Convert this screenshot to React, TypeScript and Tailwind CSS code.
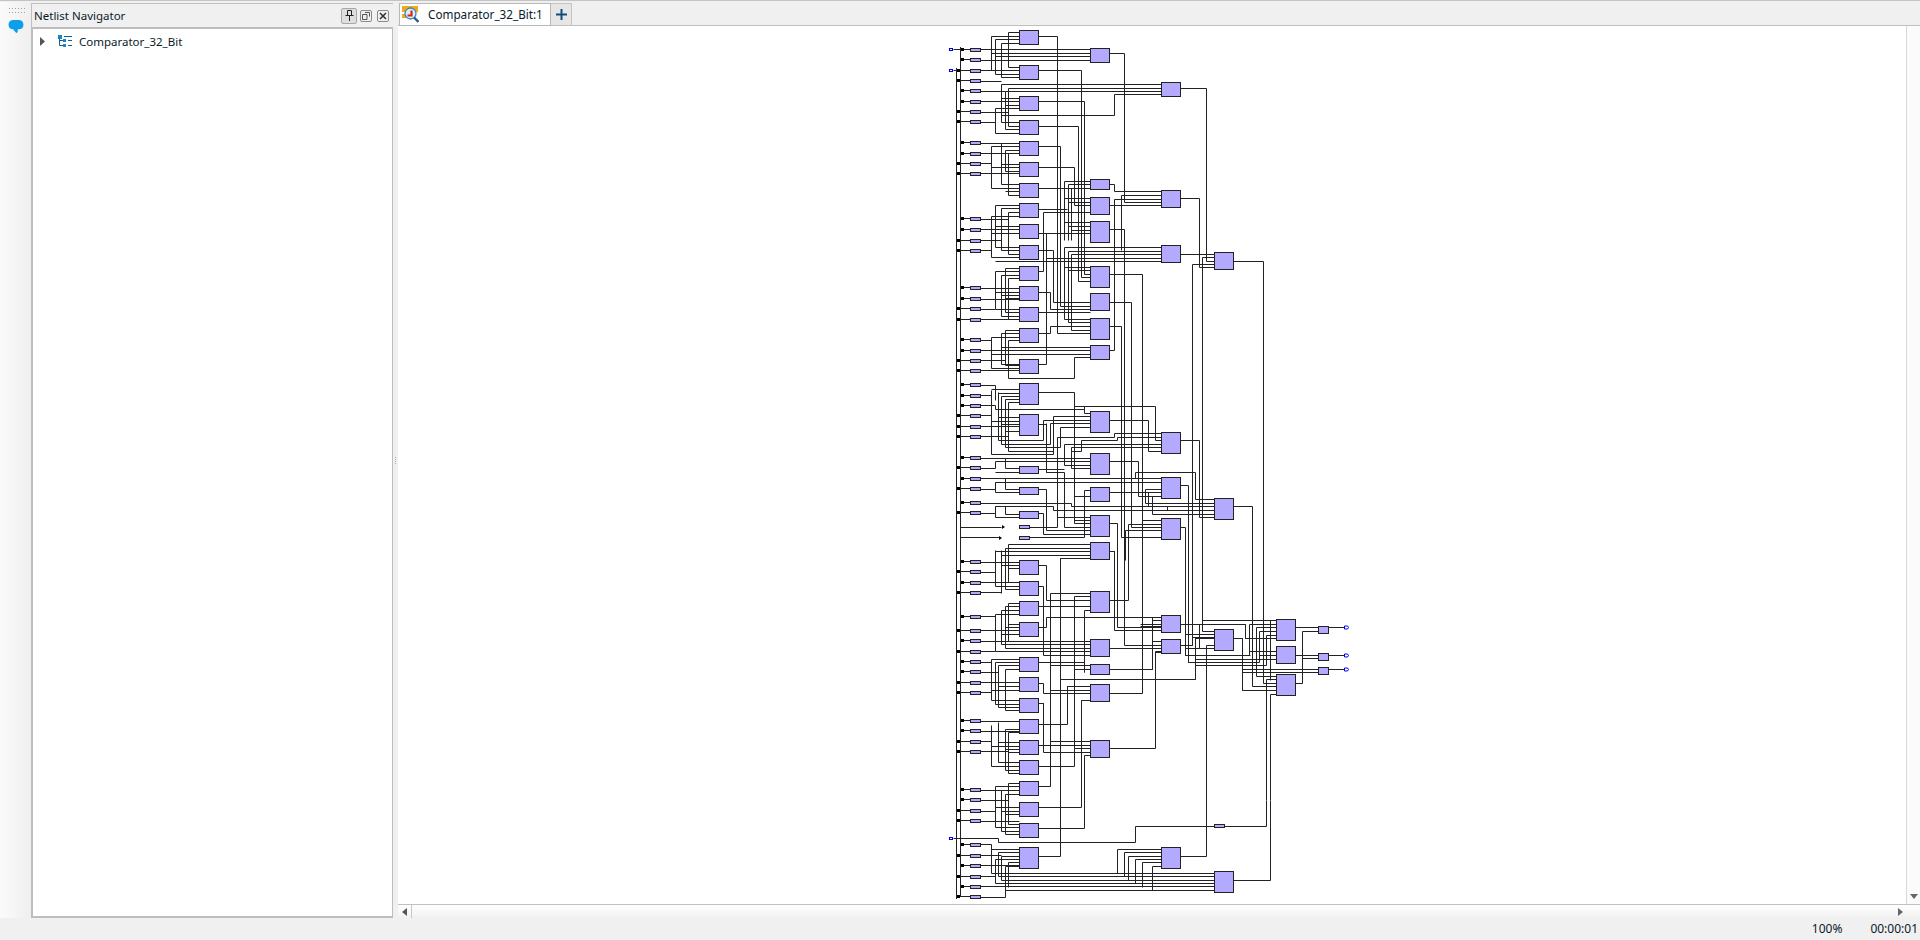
import React from "react";

type WireGroup = { ox: number; oy: number; wires: string[] };

// wires are written in crop coordinates (3x), alternating H then V from the first point
const wireGroups: WireGroup[] = [
  {
    ox: 940,
    oy: 20,
    wires: [
      "39 89 62", "39 152 49",
      "122 89 451", "122 120 451",
      "238 49 154 152 122", "122 152 238", "154 100 451",
      "238 58 166 163 238", "166 110 451",
      "238 70 184 173 238", "122 184 184",
      "238 37 205 143 238",
      "296 49 352 660", "296 152 424 660", "508 100 553 548 664", "721 205 799 660",
      "664 193 184 307 238", "664 205 205 320 238", "664 213 197 328 238", "122 213 197",
      "664 223 523 287 184", "122 245 238", "238 234 184", "238 256 197", "238 266 166 340 238",
      "122 276 205", "122 307 166",
      "296 244 433 660", "296 319 415 660", "296 379 361 660", "296 442 403 556 451",
      "122 369 238", "238 379 154 505 238", "122 401 238", "238 391 197 455 238", "238 400 205 526 238",
      "122 431 154", "122 461 238", "184 370 184 493 238", "238 433 184", "154 443 238", "197 515 238",
      "238 556 166 660", "238 566 184 660", "238 576 205 660", "238 590 154 660", "122 598 205", "122 629 238",
      "166 619 238", "154 641 238",
      "451 484 373 660", "451 494 384 660", "451 505 296", "373 535 451", "384 547 451",
      "296 568 382", "310 660 310 577 451", "395 505 395 660", "296 640 318 660",
      "373 607 451", "384 618 451", "395 630 451", "318 640 451",
      "508 493 523 514 664", "508 556 664", "664 526 544 660", "664 537 523 660",
      "721 535 778 660", "508 628 553 660",
    ],
  },
  {
    ox: 950,
    oy: 230,
    wires: [
      "322 0 322 310 420", "265 61 310 217 420", "265 124 280 0", "265 403 289 10 420",
      "265 187 301 238 420", "265 247 420", "265 310 301 290 420",
      "634 52 343 268 420", "634 63 354 278 420", "634 74 365 300 420", "290 84 634", "634 95 136",
      "420 112 343", "420 122 354", "403 0 403 133 420", "385 0 385 153 420", "394 0 394 143 420",
      "331 0 331 228 420", "478 133 577 510", "478 217 544 510", "478 290 514 510", "478 361 493 0",
      "691 73 793", "793 83 757 510", "793 103 727 510", "748 0 748 112 793", "769 0 769 93 793",
      "850 94 900", "514 0 514 60", "523 0 523 510", "373 382 420", "208 330 175 445 373 382",
      "154 352 420", "124 362 420", "124 374 420",
      "208 114 166 248 208", "208 124 136 238 208", "208 135 154 258 208", "208 146 175 268 208",
      "92 30 154", "92 60 124", "92 175 208", "92 208 208", "92 238 136", "92 269 208",
      "136 186 208", "154 196 208", "166 206 208",
      "208 301 166 405 208", "208 311 154 403 208", "208 322 124 415 208", "92 330 124", "92 362 154",
      "92 392 166", "92 422 208",
      "124 0 124 82 208", "136 0 136 52 208", "154 0 154 62 208", "175 0 175 72 208",
      "92 465 136 510", "92 497 124 510", "124 478 208", "145 490 208", "145 490 145 510",
    ],
  },
  {
    ox: 950,
    oy: 390,
    wires: [
      "265 7 373 400 420", "373 49 403 70 420", "373 49 616 150 634",
      "124 0 124 193 310 80 420", "145 8 145 152 280 92 420", "208 18 154 162 301 101 420",
      "208 27 166 173 331 112 420", "208 37 175 184 310",
      "265 104 289 246 343 411 420", "92 17 124", "92 47 136 58 403",
      "92 77 124", "124 93 208", "92 110 208", "92 140 175", "145 83 208", "154 104 208", "166 125 208",
      "478 92 595 183 634",
      "239 411 322 142 493 130 634", "634 141 503 152 394 184 365 234 420", "634 162 343 225 420", "634 172 365 184",
      "92 204 420", "92 234 136 215 420", "136 247 208", "166 205 166 235 208", "265 237 343",
      "92 266 634", "92 297 136 278 634", "136 307 208", "136 278 136 307", "166 266 166 298 208",
      "265 297 289 421 420", "265 370 280 432 420", "239 443 403 300 420", "373 320 420", "323 381 420", "373 391 420",
      "32 411 155", "32 443 148",
      "92 339 364 348 653 360 793", "92 369 136 350 310 361 793", "136 350 136 381 208", "166 350 166 373 208",
      "478 214 565 319 634", "478 308 634", "478 400 503 510", "478 484 493 510",
      "691 151 748 382 793", "691 287 715 510", "691 412 706 510",
      "556 265 556 247 736 328 793", "757 0 757 510", "727 0 727 510",
      "634 297 586 340 793", "634 308 596 350 793", "634 320 606 372 793",
      "577 0 577 510", "577 392 634", "634 402 535 510", "634 420 525 510", "514 0 514 442 634",
      "544 0 544 412 634", "523 0 523 510",
      "420 464 175 510", "420 474 166 510", "420 484 136 510", "420 495 154 510", "420 506 331 510",
      "289 100 289 246",
    ],
  },
  {
    ox: 950,
    oy: 550,
    wires: [
      "92 36 208", "92 66 136", "92 98 208", "92 128 154", "136 0 136 109 208", "154 0 154 129", "154 46 208",
      "166 0 166 118 208", "175 0 175 98", "175 56 208",
      "265 46 289 152 420", "265 109 280 315 420", "265 170 420", "265 232 289 203 607 232 634",
      "420 130 301 510", "420 140 373 510", "403 366 403 182 420",
      "478 358 607 274 634", "634 306 616 510", "478 151 535 0", "478 295 634",
      "478 3 493 242 634", "503 0 503 232 634", "634 287 523 0", "634 212 607",
      "691 224 886 265 895", "691 287 727 0", "706 0 706 317 900", "715 0 715 337 900",
      "757 0 757 243 793", "420 25 331 510", "331 388 736 266 793", "691 224 748 296 793", "793 287 770 510",
      "850 266 877 421 900", "757 212 900", "737 347 900", "877 357 900", "706 254 793",
      "92 273 420", "92 305 136 192 208", "136 305 420", "166 170 166 295 420", "154 182 154 284 420",
      "175 160 175 274 420", "208 160 175", "208 170 166", "208 182 154", "92 200 136",
      "92 242 208", "175 222 208", "166 233 208", "154 254 208",
      "208 327 124 451 208", "92 336 124", "208 337 135 462 208", "208 347 145 472 208", "92 366 145",
      "208 358 166 482 208", "92 398 208", "92 428 124", "124 420 208", "145 410 208",
      "265 338 403 366", "373 358 420", "301 347 420",
      "420 410 352 510", "420 420 301", "265 400 280 430 420", "420 451 394 510", "265 460 280 510",
      "478 430 577 0",
    ],
  },
  {
    ox: 950,
    oy: 670,
    wires: [
      "280 100 280 247 420", "265 100 280", "265 163 352 50 420", "265 226 420", "265 289 373 235 420",
      "265 349 301 214 420", "301 0 301 349", "373 0 373 235", "331 28 331 510", "770 0 770 510",
      "265 412 394 91 420", "265 475 403 256 420", "478 235 616 0",
      "92 153 208", "145 157 145 278 208", "124 167 124 290 208", "92 183 208", "208 177 166 300 208",
      "208 187 175 310 208", "92 215 124", "145 217 208", "124 228 208", "166 238 208", "92 245 175",
      "175 248 208",
      "208 340 175 463 208", "208 350 136 473 208", "208 360 154 484 208", "208 372 166 494 208",
      "92 360 208", "92 390 175", "92 423 136", "136 412 208", "154 423 208", "92 453 208", "166 433 208",
    ],
  },
  {
    ox: 940,
    oy: 800,
    wires: [
      "39 115 175 127 586 79 823", "854 79 979 0", "296 169 361 0", "721 169 799 0", "880 241 991 0",
      "122 134 154 220 823", "238 148 154", "238 158 175 230 823", "238 169 184 240 823", "122 167 184",
      "238 179 166 250 823", "122 197 238", "238 188 205 262", "122 230 166", "122 260 823",
      "238 198 197 292 122", "197 271 823",
      "664 148 532 220", "664 158 553 230", "664 169 565 240", "664 179 586 250", "664 188 607 262", "664 198 637 272",
    ],
  },
  {
    ox: 1100,
    oy: 230,
    wires: ["400 94 490 1170", "400 829 457 1170"],
  },
  {
    ox: 1140,
    oy: 600,
    wires: [
      "466 82 535", "565 82 615", "466 250 487 95 535", "466 165 535", "487 176 535", "308 208 535", "308 218 535",
      "565 166 615", "565 208 615",
      "280 115 308 270 409", "121 73 316 115 409", "188 0 188 61 409", "337 0 337 258 409", "370 0 370 250 409",
      "349 82 409", "349 82 349 228 409", "390 62 390 240",
      "137 103 223", "157 112 223", "179 145 223",
      "136 0 136 165 328 73 409", "145 0 145 187 358 93 409", "166 178 349",
      "167 115 223", "166 115 166 238 0", "199 360 199 196 379 105 409",
      "379 600 379 238 409", "390 600 390 282 409", "409 155 328", "409 165 358", "409 177 349",
      "64 52 0", "64 62 38 208 0", "64 72 0", "64 80 0", "64 90 0", "64 125 38", "64 135 0", "64 145 0",
      "46 360 46 155 64", "121 136 157 112", "137 103 137 145 179",
    ],
  },
];

// [x, y, w, h] of every block
const blocks: number[][] = [
  ...[
    [30, 14], [65, 14], [96, 14], [120, 14], [141, 14], [162, 14], [183, 14], [203, 14], [224, 14], [245, 14],
    [266, 14], [286, 14], [307, 14], [328, 14], [359, 14], [383, 21], [414, 21], [466, 7], [487, 7], [511, 7],
    [560, 14], [581, 14], [601, 14], [622, 14], [657, 14], [677, 14], [698, 14], [719, 14], [740, 14], [760, 14],
    [781, 14], [802, 14], [823, 14], [847, 21],
  ].map(([y, h]) => [1019, y, 19, h]),
  ...[
    [48, 14], [179, 10], [197, 17], [221, 21], [266, 21], [293, 17], [318, 21], [345, 14], [411, 21], [453, 21],
    [487, 14], [515, 21], [542, 17], [591, 21], [639, 17], [664, 10], [684, 17], [740, 17],
  ].map(([y, h]) => [1090, y, 19, h]),
  ...[
    [82, 14], [190, 17], [245, 17], [432, 21], [477, 21], [518, 21], [615, 17], [639, 14], [847, 21],
  ].map(([y, h]) => [1161, y, 19, h]),
  ...[[252, 17], [498, 21], [629, 21], [871, 21]].map(([y, h]) => [1214, y, 19, h]),
  ...[[619, 21], [646, 17], [674, 21]].map(([y, h]) => [1276, y, 19, h]),
  [1318, 626, 10, 7],
  [1318, 653, 10, 7],
  [1318, 667, 10, 7],
  [1019, 525, 10, 3],
  [1019, 536, 10, 3],
  [1214, 824, 10, 3],
];

// [center y, rail]  rail 1 = x956, rail 2 = x960
const inputBuffers: number[][] = [
  [49, 2], [59, 2], [70, 1], [80, 1], [90, 2], [101, 2], [111, 1], [121, 1], [142, 2], [153, 2], [163, 1], [173, 1],
  [218, 2], [229, 2], [240, 1], [250, 1], [287, 2], [298, 2], [308, 1], [319, 1], [339, 2], [350, 2], [360, 1],
  [370, 1], [384, 2], [395, 2], [405, 2], [415, 1], [426, 1], [436, 1], [457, 2], [467, 1], [478, 2], [488, 1],
  [502, 2], [512, 1], [561, 2], [571, 1], [582, 2], [592, 1], [616, 2], [630, 1], [640, 2], [651, 1], [661, 2],
  [671, 2], [682, 1], [692, 1], [720, 2], [730, 2], [741, 1], [751, 1], [789, 2], [799, 2], [810, 1], [820, 1],
  [844, 2], [855, 1], [865, 2], [876, 1], [886, 2], [896, 1],
];

const pins = [49, 70, 838];
const outPins = [627, 655, 669];

function wirePath(ox: number, oy: number, wire: string) {
  const n = wire.split(" ").map(Number);
  const mx = (v: number) => Math.floor(ox + v / 3) + 0.5;
  const my = (v: number) => Math.floor(oy + v / 3) + 0.5;
  let d = `M${mx(n[0])} ${my(n[1])}`;
  for (let i = 2; i < n.length; i++) {
    d += i % 2 === 0 ? `H${mx(n[i])}` : `V${my(n[i])}`;
  }
  return d;
}

function Schematic() {
  return (
    <svg width={420} height={878} viewBox="940 26 420 878" className="ml-[542px] block shrink-0">
      {/* rails */}
      <path d="M956.5 68V899M960.5 47V897" stroke="#222" fill="none" />
      {wireGroups.map((g) => (
        <path
          key={`${g.ox}-${g.oy}`}
          d={g.wires.map((w) => wirePath(g.ox, g.oy, w)).join("")}
          stroke="#222"
          fill="none"
        />
      ))}
      {inputBuffers.map(([y, rail]) => (
        <g key={y}>
          <path d={`M${rail === 1 ? 956.5 : 960.5} ${y + 0.5}H970`} stroke="#222" />
          <rect x={rail === 1 ? 957 : 961} y={y - 1} width={3} height={3} fill="#000" />
          <rect x={970.5} y={y - 0.5} width={10} height={3} fill="#b3aaff" stroke="#222" />
        </g>
      ))}
      {blocks.map(([x, y, w, h]) => (
        <rect key={`${x}-${y}`} x={x + 0.5} y={y + 0.5} width={w} height={h} fill="#b3aaff" stroke="#222" />
      ))}
      {/* dangling inputs with arrow heads */}
      <path d="M1002 525v4l3-2zM999 536v4l3-2z" fill="#000" />
      {pins.map((y) => (
        <rect key={y} x={949.5} y={y - 0.5} width={3} height={2} fill="#fff" stroke="#0000e0" />
      ))}
      {outPins.map((y) => (
        <path key={y} d={`M1344.5 ${y - 1}h3l1 1.500l-1 1.500h-3z`} fill="#fff" stroke="#0000e0" />
      ))}
    </svg>
  );
}

function TreeIcon() {
  return (
    <svg width="15" height="13" viewBox="0 0 15 13">
      <rect x="0" y="0" width="4" height="4" fill="#1a86c8" />
      <rect x="5" y="4" width="3" height="3" fill="#1a86c8" />
      <rect x="5" y="9" width="3" height="3" fill="#1a86c8" />
      <path d="M1.500 4v6.500H5M1.500 5.500H5M6 1.500h8M10 5.500h4M10 10.500h4" stroke="#0f5f95" fill="none" />
    </svg>
  );
}

function NetlistIcon() {
  return (
    <svg width="17" height="17" viewBox="0 0 17 17">
      <rect x="0" y="0" width="16" height="6" fill="#f2a71d" />
      <rect x="0" y="8" width="8" height="4" fill="#f2a71d" />
      <circle cx="8.500" cy="7.500" r="5.500" fill="#dcecf8" stroke="#3a86b8" strokeWidth="1.300" />
      <path d="M5.500 9.500h4V4.500" stroke="#d8231f" strokeWidth="2.200" fill="none" />
      <path d="M12 11.500l4.500 4.500" stroke="#1b5d8c" strokeWidth="2.400" />
    </svg>
  );
}

function PanelButtons() {
  return (
    <div className="flex items-center">
      <div className="flex h-[16px] w-[16px] items-center justify-center rounded-[2px] border border-[#a8a8a8] bg-[#dedede]">
        <svg width="9" height="11" viewBox="0 0 9 11">
          <path d="M2.500.5h4v5h-4zM.5 5.500h8M4.500 6v5" stroke="#222" fill="none" />
        </svg>
      </div>
      <div className="ml-[3px] flex h-[12px] w-[12px] items-center justify-center rounded-[2px] border border-[#8a8a8a]">
        <svg width="8" height="8" viewBox="0 0 8 8">
          <path d="M3 .5h4.500v4M.5 2.500h4.500v5h-4.500z" stroke="#555" fill="none" />
        </svg>
      </div>
      <div className="ml-[5px] flex h-[12px] w-[12px] items-center justify-center rounded-[2px] border border-[#8a8a8a]">
        <svg width="8" height="8" viewBox="0 0 8 8">
          <path d="M1 1l6 6M7 1l-6 6" stroke="#333" strokeWidth="1.600" />
        </svg>
      </div>
    </div>
  );
}

export default function App() {
  return (
    <div className="flex h-[940px] w-[1920px] flex-col overflow-hidden bg-[#f0f0f0] font-['Noto_Sans',sans-serif] text-[#0a1a2a]">
      <div className="h-[2px] shrink-0 border-t border-[#c4c4c4] bg-[#f0f0f0]" />
      <div className="flex min-h-0 flex-1">
        {/* left tool rail */}
        <div className="flex w-[31px] shrink-0 flex-col items-center bg-gradient-to-r from-[#fbfbfb] to-[#efefef] pt-[6px]">
          <div className="ml-[2px] grid grid-cols-6 gap-x-[2px] gap-y-[3px]">
            {Array.from({ length: 12 }, (_, i) => (
              <span key={i} className="h-[1px] w-[1px] bg-[#a0a0a0]" />
            ))}
          </div>
          <svg width="16" height="14" viewBox="0 0 16 15" className="mt-[7px] ml-[1px]">
            <path d="M5 0h6c3 0 5 2 5 5s-2 5-5 5h-1c0 2 0 3-1 4c-1 0-3-2-4-4c-3 0-5-2-5-5s2-5 5-5z" fill="#0d9fea" />
          </svg>
        </div>

        {/* netlist navigator panel */}
        <div className="flex w-[362px] shrink-0 flex-col pt-[1px]">
          <div className="flex h-[24px] shrink-0 items-center justify-between border-t border-l border-[#c0c0c0] bg-[#f0f0f0] pr-[4px] pl-[2px] text-[11.5px]">
            <span>Netlist Navigator</span>
            <PanelButtons />
          </div>
          <div className="min-h-0 flex-1 border-2 border-r-[1px] border-[#bdbdbd] bg-white">
            <div className="flex items-center pt-[4px] pl-[7px] text-[11.5px]">
              <svg width="6" height="9" viewBox="0 0 6 9" className="mr-[12px]">
                <path d="M0 0l5 4.500l-5 4.500z" fill="#555" />
              </svg>
              <TreeIcon />
              <span className="ml-[6px]">Comparator_32_Bit</span>
            </div>
          </div>
        </div>

        {/* splitter */}
        <div className="flex w-[5px] shrink-0 flex-col items-center justify-center gap-[1px]">
          {Array.from({ length: 4 }, (_, i) => (
            <span key={i} className="h-[1px] w-[1px] bg-[#b0b0b0]" />
          ))}
        </div>

        {/* document area */}
        <div className="flex min-w-0 flex-1 flex-col">
          <div className="flex h-[24px] shrink-0 items-start border-b border-[#c0c0c0] pt-[1px] pl-[1px]">
            <div className="flex h-[23px] w-[152px] shrink-0 items-center border border-[#b8b8b8] bg-white pl-[2px] text-[11.7px]">
              <NetlistIcon />
              <span className="ml-[9px]">Comparator_32_Bit:1</span>
            </div>
            <div className="flex h-[22px] w-[21px] shrink-0 items-center justify-center border-t border-r border-[#c4c4c4] bg-[#e6e6e6]">
              <svg width="11" height="11" viewBox="0 0 11 11">
                <path d="M5.500 0v11M0 5.500h11" stroke="#0f4d80" strokeWidth="2" />
              </svg>
            </div>
          </div>
          <div className="flex min-h-0 flex-1 bg-white">
            <div className="min-w-0 flex-1 overflow-hidden">
              <Schematic />
            </div>
            <div className="flex w-[14px] shrink-0 flex-col items-center justify-end border-l border-[#d8d8d8] bg-[#fbfbfb] pb-[5px]">
              <svg width="8" height="5" viewBox="0 0 8 5">
                <path d="M0 0h8l-4 5z" fill="#666" />
              </svg>
            </div>
          </div>
          <div className="flex h-[14px] shrink-0 items-center justify-between border-t border-[#c0c0c0] bg-gradient-to-b from-[#ffffff] to-[#f0f0f0] pr-[17px]">
            <div className="flex h-full w-[14px] items-center justify-center border-r border-[#c8c8c8]">
              <svg width="5" height="8" viewBox="0 0 5 8">
                <path d="M5 0v8l-5-4z" fill="#555" />
              </svg>
            </div>
            <svg width="5" height="8" viewBox="0 0 5 8">
              <path d="M0 0v8l5-4z" fill="#666" />
            </svg>
          </div>
        </div>
      </div>

      {/* status bar */}
      <div className="flex h-[22px] shrink-0 items-center justify-end pr-[2px] text-[12px]">
        <span className="mr-[28px]">100%</span>
        <span>00:00:01</span>
      </div>
    </div>
  );
}
